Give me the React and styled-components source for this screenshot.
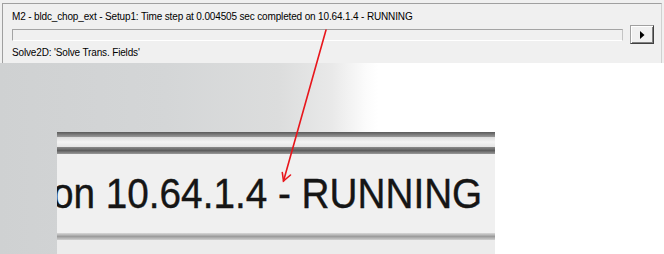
import React from "react";
import styled, { createGlobalStyle } from "styled-components";

const GlobalStyle = createGlobalStyle`
  html, body {
    margin: 0;
    padding: 0;
    background: #ffffff;
  }
`;

const Page = styled.div`
  position: relative;
  width: 664px;
  height: 254px;
  overflow: hidden;
  font-family: "Liberation Sans", Arial, sans-serif;
`;

const Window = styled.div`
  height: 63px;
  box-sizing: border-box;
  background: #f0f0f0;
  padding: 3px 2px 0 2px;
`;

const Frame = styled.div`
  height: 100%;
  box-sizing: border-box;
  border-top: 1px solid #a0a0a0;
  border-left: 1px solid #a0a0a0;
  border-right: 1px solid #d0d0d0;
  padding: 6px 7px 0 9px;
`;

const Status = styled.div`
  font-size: 10px;
  line-height: 13px;
  letter-spacing: -0.15px;
  color: #000000;
  white-space: nowrap;
  margin-top: ${props => props.gap || 0}px;
`;

const ProgressRow = styled.div`
  display: flex;
  align-items: center;
  gap: 7px;
  margin-top: 2px;
  height: 19px;
`;

const Progress = styled.div`
  flex: 1;
  height: 12px;
  box-sizing: border-box;
  border-top: 1px solid #a4a4a4;
  border-left: 1px solid #a4a4a4;
  border-bottom: 1px solid #ffffff;
  border-right: 1px solid #c4c4c4;
  background: #f0f0f0;
`;

const PlayButton = styled.div`
  width: 24px;
  height: 19px;
  box-sizing: border-box;
  border: 1px solid;
  border-color: #a0a0a0 #404040 #404040 #a0a0a0;
  box-shadow: inset 1px 1px #ffffff, inset -1px -1px #808080;
  background: #f0f0f0;
  display: flex;
  align-items: center;
  justify-content: center;
`;

const Lower = styled.div`
  height: 191px;
  box-sizing: border-box;
  padding: 69px 0 0 57px;
  background: linear-gradient(
    to right,
    #cfd1d2 0%,
    #d4d6d7 25%,
    #dcdddd 42%,
    #e9e9e9 50%,
    #fbfbfb 55%,
    #ffffff 57%
  );
`;

const Inset = styled.div`
  width: 438px;
  height: 122px;
  display: flex;
  flex-direction: column;
  overflow: hidden;
  background: #f0f0f0;
`;

const Band = styled.div`
  height: ${props => props.h}px;
  flex: none;
  background: ${props => props.bg};
`;

const BigTextArea = styled.div`
  height: 79px;
  flex: none;
  box-sizing: border-box;
  padding-top: 18px;
  background: #f0f0f0;
  white-space: nowrap;
  overflow: hidden;
`;

const BigText = styled.span`
  display: inline-block;
  margin-left: -5px;
  font-size: 43px;
  line-height: 43px;
  color: #151515;
  transform: scaleX(0.9);
  transform-origin: left center;
  -webkit-text-stroke: 0.4px #151515;
`;

const Pointer = styled.svg`
  position: absolute;
  left: 0;
  top: 0;
  pointer-events: none;
`;

export default function App() {
  return (
    <Page>
      <GlobalStyle />
      <Window>
        <Frame>
          <Status>
            M2 - bldc_chop_ext - Setup1: Time step at 0.004505 sec completed on 10.64.1.4 - RUNNING
          </Status>
          <ProgressRow>
            <Progress />
            <PlayButton>
              <svg width="5" height="8" viewBox="0 0 5 8">
                <path d="M0 0 L4.5 4 L0 8 Z" fill="#000" />
              </svg>
            </PlayButton>
          </ProgressRow>
          <Status gap={2}>Solve2D: 'Solve Trans. Fields'</Status>
        </Frame>
      </Window>
      <Lower>
        <Inset>
          <Band h={5} bg="linear-gradient(#5a5a5a, #9a9a9a)" />
          <Band h={10} bg="linear-gradient(#dcdcdc, #f4f4f4 50%, #e4e4e4)" />
          <Band h={7} bg="linear-gradient(#8a8a8a, #5e5e5e 50%, #9a9a9a)" />
          <BigTextArea>
            <BigText>on 10.64.1.4 - RUNNING</BigText>
          </BigTextArea>
          <Band h={7} bg="linear-gradient(#d8d8d8, #9c9c9c 50%, #d0d0d0)" />
          <Band h={14} bg="#ececec" />
        </Inset>
      </Lower>
      <Pointer width="664" height="254" viewBox="0 0 664 254">
        <g stroke="#e8161c" strokeWidth="1.6" fill="none" strokeLinecap="round">
          <line x1="326" y1="30" x2="283.5" y2="181" />
          <polyline points="282.3,172.5 283.5,181 290.5,175" />
        </g>
      </Pointer>
    </Page>
  );
}
